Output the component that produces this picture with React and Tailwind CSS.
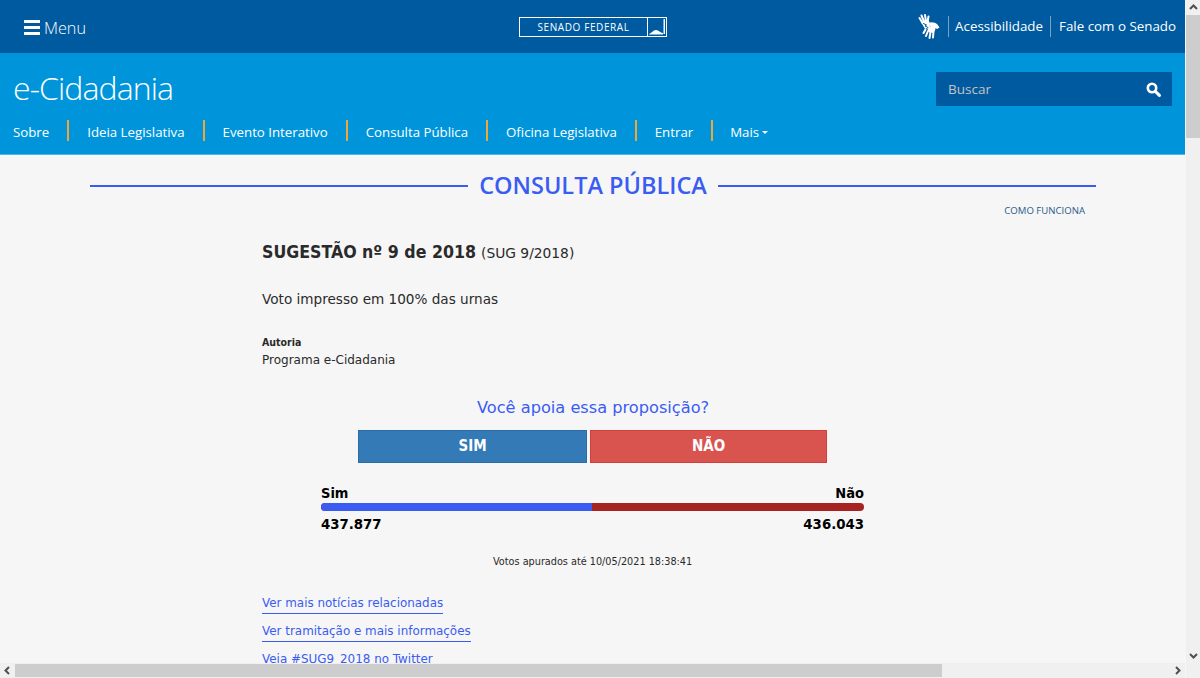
import React from 'react';

const navItems = ['Sobre', 'Ideia Legislativa', 'Evento Interativo', 'Consulta Pública', 'Oficina Legislativa', 'Entrar'];

const HandsIcon = () => (
  <svg width="22" height="25" viewBox="0 0 22 25" fill="white" stroke="white" strokeLinecap="round">
    {/* upper hand */}
    <path d="M1.5 4l3 5M3.5 1.5l2.5 6M7 1l1 6.5M10.5 2.5L9.5 8" strokeWidth="2" fill="none" />
    <path d="M3 8l8-1.5 1 6-5 2.5z" stroke="none" />
    {/* lower hand */}
    <path d="M10 9c3-1.5 7-1 9.5 1.5l2 3-2.5 1.5-1.5-1-1 3.5z" stroke="none" />
    <path d="M9 13l5-1 3.5 3-2 4-5-1z" stroke="none" />
    <path d="M7.5 15.5L5.5 19M10 17l-2 5M12.5 18l-1 6M15.5 17.5L15 23.5" strokeWidth="2" fill="none" />
    <path d="M5.5 9.5l3 1.5-1.5 1 3 1.5" stroke="#005a9f" strokeWidth="1" fill="none" />
  </svg>
);

const SearchIcon = () => (
  <svg width="15" height="15" viewBox="0 0 15 15" fill="none" stroke="white">
    <circle cx="6" cy="6" r="4.2" strokeWidth="2.6" />
    <path d="M9.6 9.6l3.8 3.8" strokeWidth="3" strokeLinecap="round" />
  </svg>
);

const Chevron = ({ d }) => (
  <svg width="9" height="9" viewBox="0 0 9 9" fill="none" stroke="#505050" strokeWidth="2">
    <path d={d} />
  </svg>
);

const SenadoLogo = () => (
  <div className="flex h-[20px] w-[148px] items-stretch border border-white">
    <div className="flex flex-1 items-center justify-center text-[10px] tracking-[0.6px] text-white">SENADO FEDERAL</div>
    <div className="w-[19px] border-l border-white">
      <svg width="18" height="18" viewBox="0 0 18 18" fill="white">
        <path d="M1 16c3-1 4-4 7-4s4 3 7 3v1.5H1z" />
        <rect x="15.5" y="1" width="1.5" height="15" />
      </svg>
    </div>
  </div>
);

const App = () => {
  return (
    <div className="flex h-[678px] w-[1200px] overflow-hidden bg-[#f6f6f6]">
      <div className="flex w-[1185px] flex-col">
        <div className="h-[663px] overflow-hidden">
          {/* top bar */}
          <div className="relative flex h-[53px] items-center justify-between bg-[#005a9f] font-['Open_Sans',sans-serif] text-white">
            <div className="flex items-center pl-[24px] pt-[3px]">
              <div className="mr-[4px] flex w-[16px] flex-col gap-[3px]">
                <span className="h-[3px] bg-white" />
                <span className="h-[3px] bg-white" />
                <span className="h-[3px] bg-white" />
              </div>
              <span className="text-[16.2px] font-light">Menu</span>
            </div>
            <div className="absolute left-[519px] top-[17px]">
              <SenadoLogo />
            </div>
            <div className="flex items-center pr-[9px] text-[13.35px]">
              <HandsIcon />
              <span className="ml-[8px] border-l border-[#7f9fc0] pl-[6px] leading-[21px]">Acessibilidade</span>
              <span className="ml-[7px] border-l border-[#7f9fc0] pl-[8px] leading-[21px]">Fale com o Senado</span>
            </div>
          </div>

          {/* blue header */}
          <div className="h-[102px] border-b border-[#4db5e6] bg-[#0095da] font-['Open_Sans',sans-serif] text-white">
            <div className="flex items-start justify-between pl-[13px] pr-[13px] pt-[19px]">
              <span className="-mt-[2px] text-[32px] font-light leading-[36px] tracking-[-0.9px]">e-Cidadania</span>
              <div className="flex h-[34px] w-[236px] items-center justify-between bg-[#005a9f] pl-[12px] pr-[11px]">
                <span className="text-[13.5px] text-[#c4c4c4]">Buscar</span>
                <SearchIcon />
              </div>
            </div>
            <nav className="mt-[14px] flex items-center pl-[13px] text-[13.25px]">
              {navItems.map((item) => (
                <span key={item} className="mr-[18px] flex items-center">
                  <span className="mr-[18px] pt-[3px] leading-[18px]">{item}</span>
                  <span className="h-[21px] w-[2px] bg-[#e9a93c]" />
                </span>
              ))}
              <span className="-ml-[1px] flex items-center pt-[3px] leading-[18px]">
                Mais
                <span className="ml-[3px] border-x-[3px] border-t-[3px] border-x-transparent border-t-white" />
              </span>
            </nav>
          </div>

          {/* content */}
          <div className="font-['DejaVu_Sans',sans-serif] text-[#2a2a2a]">
            <div className="flex items-center pl-[90px] pr-[89px] pt-[15px]">
              <span className="h-[2px] flex-1 bg-[#3a5cf2]" />
              <h1 className="-mt-[1px] px-[11px] font-['Open_Sans',sans-serif] text-[23.5px] font-semibold leading-[32px] text-[#3a5cf2]">CONSULTA PÚBLICA</h1>
              <span className="h-[2px] flex-1 bg-[#3a5cf2]" />
            </div>
            <div className="pr-[100px] pt-[3px] text-right font-['Open_Sans',sans-serif] text-[9.6px] leading-[14px] text-[#2a5a8c]">COMO FUNCIONA</div>

            <div className="pl-[262px]">
              <div className="pt-[22px] leading-[24px]">
                <span className="font-['DejaVu_Sans_Condensed','DejaVu_Sans',sans-serif] text-[17.6px] font-bold">SUGESTÃO nº 9 de 2018</span>{' '}
                <span className="text-[13.8px]">(SUG 9/2018)</span>
              </div>
              <p className="pt-[23px] text-[13.6px] leading-[22px]">Voto impresso em 100% das urnas</p>
              <p className="pt-[24px] font-['DejaVu_Sans_Condensed','DejaVu_Sans',sans-serif] text-[10.5px] font-bold leading-[16px]">Autoria</p>
              <p className="pt-[2px] text-[12px] leading-[17px]">Programa e-Cidadania</p>
            </div>

            <p className="pt-[28px] pl-[477px] text-[16.2px] leading-[22px] text-[#3a5cf2]">Você apoia essa proposição?</p>

            <div className="flex pl-[358px] pt-[11px] font-['DejaVu_Sans_Condensed','DejaVu_Sans',sans-serif] text-[15px] font-bold text-white">
              <button className="h-[33px] w-[229px] border border-[#2e6da4] bg-[#337ab7]">SIM</button>
              <button className="ml-[3px] h-[33px] w-[237px] border border-[#d43f3a] bg-[#d9534f]">NÃO</button>
            </div>

            <div className="ml-[321px] w-[543px] pt-[21px] font-['DejaVu_Sans_Condensed','DejaVu_Sans',sans-serif] text-black">
              <div className="flex justify-between text-[14.5px] font-bold leading-[19px]">
                <span>Sim</span>
                <span>Não</span>
              </div>
              <div className="flex h-[8px] overflow-hidden rounded-[4px] bg-[#a52421]">
                <div className="w-[271px] bg-[#3a5cf2]" />
              </div>
              <div className="flex justify-between pt-[3px] text-[14.8px] font-bold leading-[19px]">
                <span>437.877</span>
                <span>436.043</span>
              </div>
            </div>

            <p className="pt-[22px] pl-[493px] text-[9.7px] leading-[14px]">Votos apurados até 10/05/2021 18:38:41</p>

            <div className="flex flex-col items-start gap-[9px] pl-[262px] pt-[26px] text-[11.93px] leading-[17px] text-[#3a5cf2]">
              <a className="border-b border-[#3a5cf2] pb-[1px]">Ver mais notícias relacionadas</a>
              <a className="border-b border-[#3a5cf2] pb-[1px]">Ver tramitação e mais informações</a>
              <a>Veja #SUG9_2018 no Twitter</a>
            </div>
          </div>
        </div>

        {/* horizontal scrollbar */}
        <div className="flex h-[15px] items-center bg-[#f0f0f0]">
          <div className="flex w-[15px] justify-center"><Chevron d="M6 1L2.5 4.5 6 8" /></div>
          <div className="h-[13px] w-[927px] bg-[#cdcdcd]" />
          <div className="flex flex-1 justify-end pr-[3px]"><Chevron d="M3 1l3.5 3.5L3 8" /></div>
        </div>
      </div>

      {/* vertical scrollbar */}
      <div className="flex w-[15px] flex-col items-center border-l border-[#f6f6f6] bg-[#f0f0f0]">
        <div className="flex h-[15px] items-center justify-center"><Chevron d="M1 6l3.5-3.5L8 6" /></div>
        <div className="h-[123px] w-[14px] bg-[#cdcdcd]" />
        <div className="flex-1" />
        <div className="mb-[15px] flex h-[15px] items-center justify-center"><Chevron d="M1 3l3.5 3.5L8 3" /></div>
      </div>
    </div>
  );
};

export default App;
